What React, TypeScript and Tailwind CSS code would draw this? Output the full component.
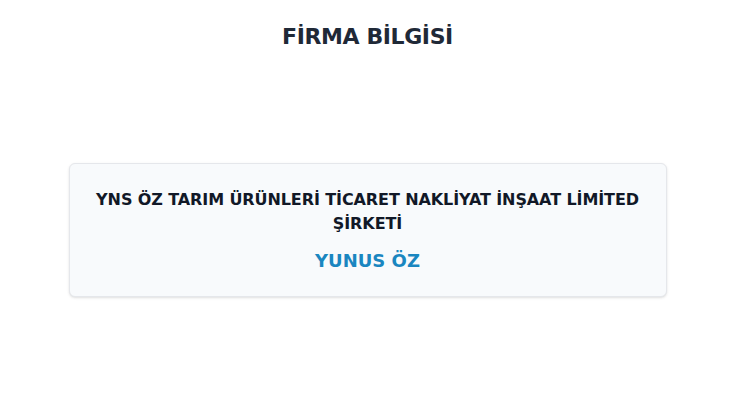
export default function App() {
  return (
    <div
      className="min-h-[420px] w-full bg-white pr-[15px]"
      style={{ fontFamily: '"DejaVu Sans", "Noto Sans", sans-serif' }}
    >
      <div className="flex flex-col items-center pt-[22px]">
        <h1 className="text-[22px] leading-[30px] font-bold tracking-[-0.4px] text-[#1f2937]">FİRMA BİLGİSİ</h1>
        <div className="mt-[111px] w-[598px] rounded-md border border-[#e5e7eb] bg-[#f8fafc] px-6 pt-[24px] pb-[22px] text-center shadow-sm">
          <p className="text-[16px] leading-[24px] font-bold tracking-[-0.1px] text-[#111827]">
            YNS ÖZ TARIM ÜRÜNLERİ TİCARET NAKLİYAT İNŞAAT LİMİTED ŞİRKETİ
          </p>
          <p className="mt-[12px] text-[18px] leading-[26px] font-bold text-[#1a86c0]">YUNUS ÖZ</p>
        </div>
      </div>
    </div>
  );
}
